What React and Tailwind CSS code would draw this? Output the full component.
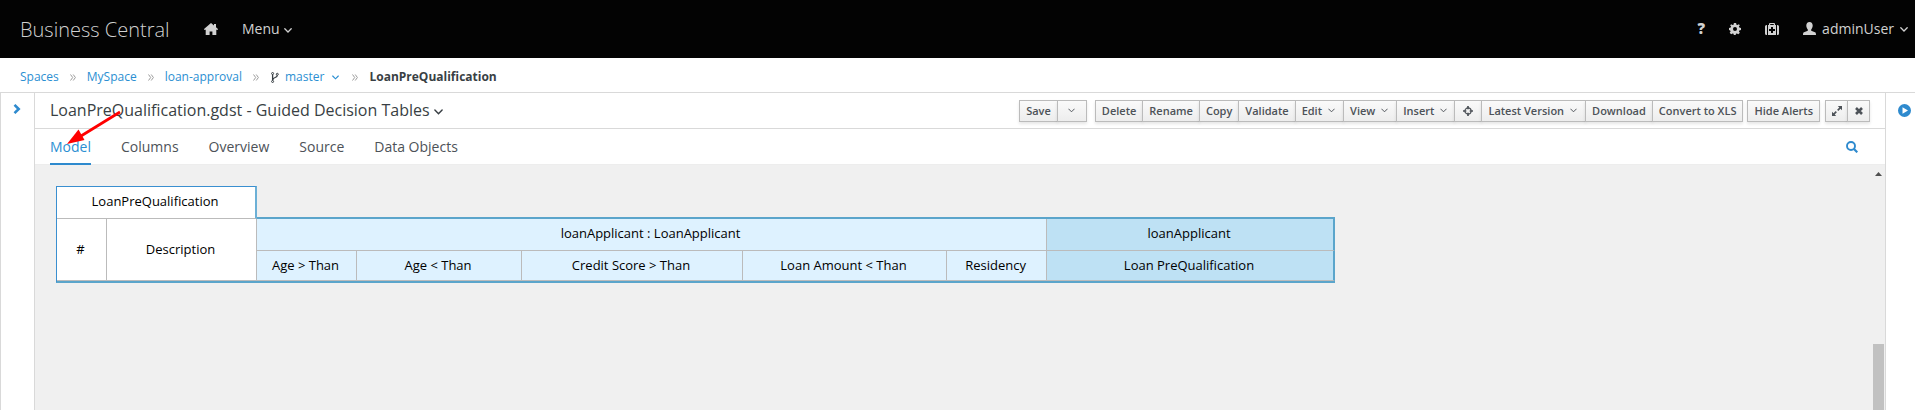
import React from "react";

function AngleDown({ className = "", thin = false }) {
  return (
    <svg viewBox="0 0 8 5" className={className} fill="none" stroke="currentColor" strokeWidth={thin ? 1.1 : 1.3} strokeLinecap="round" aria-hidden="true">
      <path d="M0.8 0.8 L4 4 L7.2 0.8" />
    </svg>
  );
}

function HomeIcon() {
  return (
    <svg viewBox="0 0 14 12" className="h-3 w-3.5" fill="currentColor" aria-hidden="true">
      <path d="M7 0 L10 2.6 V1 H12 V4.300 L14 6 V6.800 H12.3 V12 H8.4 V8.500 H5.6 V12 H1.7 V6.800 H0 V6 Z" />
    </svg>
  );
}

function GearIcon() {
  return (
    <svg viewBox="0 0 24 24" className="size-3" fill="currentColor" fillRule="evenodd" aria-hidden="true">
      <path d="M9.8 0h4.4l.7 3.4 1.9.8L19.7 2.3l2 2-1.9 2.9.8 1.9 3.4.7v4.4l-3.4.7-.8 1.9 1.9 2.9-3 3-2.900-1.900-1.900.8-.7 3.400H9.800l-.7-3.400-1.900-.8-2.900 1.900-3-3 1.900-2.900-.8-1.900L0 14.200V9.800l3.400-.7.8-1.900L2.300 4.300l2-2 2.900 1.900 1.900-.8zM12 8a4 4 0 1 0 0 8 4 4 0 0 0 0-8z" />
    </svg>
  );
}

function KitIcon() {
  return (
    <svg viewBox="0 0 14 12" className="h-3 w-3.5" fill="currentColor" fillRule="evenodd" aria-hidden="true">
      <path d="M4 2V1a1 1 0 0 1 1-1h4a1 1 0 0 1 1 1v1h1v10H3V2zm1.200 0h3.600V1.100H5.200zM6 4v2H4v2h2v2h2V8h2V6H8V4z" />
      <path d="M2 2v10H1.500A1.500 1.500 0 0 1 0 10.500v-7A1.500 1.500 0 0 1 1.500 2zM12 2h.5A1.500 1.500 0 0 1 14 3.500v7a1.500 1.500 0 0 1-1.500 1.500H12z" />
    </svg>
  );
}

function UserIcon() {
  return (
    <svg viewBox="0 0 13 13" className="size-[13px]" fill="currentColor" aria-hidden="true">
      <path d="M6.500 0C8.600 0 9.700 1.500 9.700 3.600 9.700 5.500 8.900 6.700 8.200 7.400V8.700L12 10.200C12.700 10.500 13 11.200 13 13H0C0 11.200.3 10.500 1 10.200L4.800 8.700V7.400C4.100 6.700 3.300 5.500 3.300 3.600 3.300 1.500 4.400 0 6.500 0Z" />
    </svg>
  );
}

function BranchIcon() {
  return (
    <svg viewBox="0 0 8 11" className="h-[11px] w-2 text-[#393f44]" fill="none" stroke="currentColor" strokeWidth="1" aria-hidden="true">
      <circle cx="1.600" cy="1.500" r="1" />
      <circle cx="1.600" cy="9.500" r="1" />
      <circle cx="6.300" cy="2.300" r="1" />
      <path d="M1.600 2.500V8.500M6.300 3.300C6.300 6.200 1.900 4.800 1.800 8" strokeWidth="1.300" />
    </svg>
  );
}

function CrosshairIcon() {
  return (
    <svg viewBox="0 0 10 10" className="size-2.5" fill="none" stroke="currentColor" aria-hidden="true">
      <circle cx="5" cy="5" r="3.100" strokeWidth="1.200" />
      <path d="M5 0V3.300M5 6.700V10M0 5H3.300M6.700 5H10" strokeWidth="1.700" />
    </svg>
  );
}

function ExpandIcon() {
  return (
    <svg viewBox="0 0 10 10" className="size-2.5" fill="currentColor" aria-hidden="true">
      <path d="M5.800 0H10V4.200L8.500 2.700 6.300 4.900 5.100 3.700 7.300 1.500ZM4.200 10H0V5.800L1.500 7.300 3.700 5.100 4.900 6.300 2.700 8.500Z" />
    </svg>
  );
}

function CloseIcon() {
  return (
    <svg viewBox="0 0 8 8" className="size-2" stroke="currentColor" strokeWidth="2.600" aria-hidden="true">
      <path d="M1 1L7 7M7 1L1 7" />
    </svg>
  );
}

function Separator() {
  return (
    <svg viewBox="0 0 6 7" className="h-[7px] w-1.5 text-[#9c9c9c]" fill="none" stroke="currentColor" strokeWidth="1" aria-hidden="true">
      <path d="M0.500 0.500L2.700 3.500L0.500 6.500M3.200 0.500L5.400 3.500L3.200 6.500" />
    </svg>
  );
}

function ToolButton({ children, caret, pad = "px-1.5", label }) {
  return (
    <button
      type="button"
      aria-label={label}
      className={`-ml-px flex h-[22px] items-center justify-center border border-[#bbb] bg-linear-to-b from-[#fafafa] to-[#ededed] text-[11px] leading-4 font-semibold whitespace-nowrap text-[#4d5258] shadow-[0_2px_3px_rgba(3,3,3,0.1)] ${pad}`}
    >
      {children}
      {caret && <AngleDown thin className="ml-1.5 h-[5px] w-[7px]" />}
    </button>
  );
}

const tabs = ["Columns", "Overview", "Source", "Data Objects"];
const conditions = ["Age > Than", "Age < Than", "Credit Score > Than", "Loan Amount < Than", "Residency"];

export default function App() {
  return (
    <div className="flex h-screen flex-col overflow-hidden bg-white font-['Open_Sans',sans-serif] text-[#393f44]">
      <header className="flex h-[58px] shrink-0 items-center bg-[#030303] pr-[7px] pl-5 text-sm text-[#d1d1d1]">
        <h1 className="w-[184px] pt-0.5 text-xl leading-8 font-light">Business Central</h1>
        <a href="#home" aria-label="Home" className="w-[38px]"><HomeIcon /></a>
        <button type="button" className="flex items-center gap-1">
          Menu <AngleDown className="mt-0.5 h-[5px] w-2" />
        </button>
        <nav className="ml-auto flex items-center">
          <button type="button" aria-label="Help" className="mr-6 text-[15px] font-extrabold">?</button>
          <button type="button" aria-label="Settings" className="mr-6"><GearIcon /></button>
          <button type="button" aria-label="Administration" className="mr-6"><KitIcon /></button>
          <button type="button" className="flex items-center gap-1.5">
            <UserIcon /> adminUser <AngleDown className="mt-0.5 h-[5px] w-2" />
          </button>
        </nav>
      </header>

      <nav aria-label="Breadcrumb" className="flex h-[35px] shrink-0 items-center border-b border-[#d9d9d9] pt-1 pl-5 text-xs text-[#2b8fd2]">
        <div className="flex items-center gap-[11px]">
          <a href="#spaces">Spaces</a>
          <Separator />
          <a href="#myspace">MySpace</a>
          <Separator />
          <a href="#loan-approval">loan-approval</a>
          <Separator />
          <button type="button" className="ml-px flex items-center gap-1.5">
            <BranchIcon /> master <AngleDown className="mx-0.5 h-[5px] w-[7px]" />
          </button>
          <Separator />
          <span className="font-bold text-[#393f44]">LoanPreQualification</span>
        </div>
      </nav>

      <div className="flex min-h-0 flex-1">
        <aside className="flex w-[35px] shrink-0 items-start border-x border-[#d9d9d9]">
          <button type="button" aria-label="Expand navigator" className="mt-[11px] ml-3 text-[#2e8ace]">
            <svg viewBox="0 0 8 10" className="h-2.5 w-2" fill="none" stroke="currentColor" strokeWidth="2.600" aria-hidden="true">
              <path d="M1.500 0.900L5.700 5L1.500 9.100" />
            </svg>
          </button>
        </aside>

        <main className="relative flex min-w-0 flex-1 flex-col">
          <div className="flex h-9 shrink-0 items-center justify-between border-b border-[#d9d9d9] px-[15px]">
            <button type="button" className="flex items-center gap-1 pb-0.5 text-base">
              LoanPreQualification.gdst - Guided Decision Tables <AngleDown className="mt-1 h-1.5 w-[9px]" />
            </button>
            <div className="flex items-center">
              <div className="mr-[9px] flex">
                <ToolButton>Save</ToolButton>
                <ToolButton label="Save options" pad="w-[30px]"><AngleDown thin className="h-[5px] w-[7px]" /></ToolButton>
              </div>
              <div className="mr-[5px] flex">
                <ToolButton>Delete</ToolButton>
                <ToolButton>Rename</ToolButton>
                <ToolButton>Copy</ToolButton>
                <ToolButton>Validate</ToolButton>
                <ToolButton caret pad="pl-1.5 pr-2">Edit</ToolButton>
                <ToolButton caret pad="pl-1.5 pr-2">View</ToolButton>
                <ToolButton caret pad="pl-1.5 pr-[7px]">Insert</ToolButton>
                <ToolButton label="Locate" pad="w-7"><CrosshairIcon /></ToolButton>
                <ToolButton caret pad="pl-1.5 pr-2">Latest Version</ToolButton>
                <ToolButton>Download</ToolButton>
                <ToolButton>Convert to XLS</ToolButton>
              </div>
              <div className="mr-1.5 flex">
                <ToolButton>Hide Alerts</ToolButton>
              </div>
              <div className="flex">
                <ToolButton label="Maximize" pad="w-[23px]"><ExpandIcon /></ToolButton>
                <ToolButton label="Close" pad="w-[23px]"><CloseIcon /></ToolButton>
              </div>
            </div>
          </div>

          <div className="flex h-9 shrink-0 items-center border-b border-[#ededed] pr-[27px] pl-[15px] text-sm text-[#4d5258]">
            <div role="tablist" className="flex h-9 gap-[30px]">
              <button type="button" role="tab" aria-selected="true" className="border-b-2 border-[#2e8ace] pt-0.5 text-[#2b8fd2]">Model</button>
              {tabs.map((t) => (
                <button key={t} type="button" role="tab" aria-selected="false" className="border-b-2 border-transparent pt-0.5">{t}</button>
              ))}
            </div>
            <button type="button" aria-label="Search" className="ml-auto text-[#2e8ace]">
              <svg viewBox="0 0 12 12" className="size-3" fill="none" stroke="currentColor" strokeWidth="1.900" aria-hidden="true">
                <circle cx="5" cy="5" r="4" />
                <path d="M8 8L11.300 11.300" strokeWidth="2.200" />
              </svg>
            </button>
          </div>

          <div className="flex min-h-0 flex-1 bg-[#f0f0f0]">
            <div className="flex-1 pt-[21px] pl-[21px]">
              <table className="w-[1279px] table-fixed border-separate border-spacing-0 border-b-2 border-l border-b-[#5ba5cb] border-l-[#3a8fd0] text-[13px] leading-5 text-black">
                <colgroup>
                  <col className="w-[50px]" />
                  <col className="w-[150px]" />
                  <col className="w-[100px]" />
                  <col className="w-[165px]" />
                  <col className="w-[221px]" />
                  <col className="w-[204px]" />
                  <col className="w-[100px]" />
                  <col className="w-[288px]" />
                </colgroup>
                <thead>
                  <tr className="h-[33px]">
                    <th colSpan={2} className="border-t border-r-2 border-b border-t-[#3a8fd0] border-r-[#6cb0d6] border-b-[#bbb] bg-white pt-0 pr-0.5 pb-1 pl-0 font-normal">LoanPreQualification</th>
                    <td colSpan={6} className="border-b-2 border-[#5ba5cb] p-0" />
                  </tr>
                  <tr className="h-8">
                    <th rowSpan={2} className="border-r border-b border-[#bbb] bg-white pt-0 pr-0.5 pb-0.5 pl-0 font-normal">#</th>
                    <th rowSpan={2} className="border-r border-b border-[#bbb] bg-white pt-0 pr-0.5 pb-0.5 pl-0 font-normal">Description</th>
                    <th colSpan={5} className="border-r border-b border-[#bbb] bg-[#def2ff] pt-0 pr-0.5 pb-1 pl-0 font-normal">loanApplicant : LoanApplicant</th>
                    <th className="border-r-2 border-b border-r-[#5ba5cb] border-b-[#bbb] bg-[#bee1f4] pt-0 pr-0.5 pb-1 pl-0 font-normal">loanApplicant</th>
                  </tr>
                  <tr className="h-[30px]">
                    {conditions.map((c) => (
                      <th key={c} className="border-r border-b border-[#bbb] bg-[#def2ff] pt-0 pr-0.5 pb-0.5 pl-0 font-normal">{c}</th>
                    ))}
                    <th className="border-r-2 border-b border-r-[#5ba5cb] border-b-[#bbb] bg-[#bee1f4] pt-0 pr-0.5 pb-0.5 pl-0 font-normal">Loan PreQualification</th>
                  </tr>
                </thead>
              </table>
            </div>
            <div className="mr-px flex w-[11px] shrink-0 flex-col items-center justify-between" aria-hidden="true">
              <svg viewBox="0 0 7 4" className="mt-[7px] h-1 w-[7px]" fill="#505050"><path d="M0 4L3.500 0L7 4Z" /></svg>
              <div className="h-[66px] w-full bg-[#c1c1c1]" />
            </div>
          </div>

          <svg viewBox="0 0 54 35" className="pointer-events-none absolute top-[17px] left-8 h-[35px] w-[54px]" aria-hidden="true">
            <path d="M53 2L14 26" stroke="#f00" strokeWidth="2.800" />
            <path d="M0 34L11.500 19.500L17.500 30Z" fill="#f00" />
          </svg>
        </main>

        <aside className="flex w-[30px] shrink-0 items-start border-l border-[#d9d9d9]">
          <button type="button" aria-label="Expand alerts" className="mt-[11px] ml-3 text-[#2e8ace]">
            <svg viewBox="0 0 13 13" className="size-[13px]" fill="currentColor" fillRule="evenodd" aria-hidden="true">
              <path d="M6.500 0a6.500 6.500 0 1 0 0 13 6.500 6.500 0 0 0 0-13ZM4.500 3.200L10 6.500L4.500 9.800Z" />
            </svg>
          </button>
        </aside>
      </div>
    </div>
  );
}
